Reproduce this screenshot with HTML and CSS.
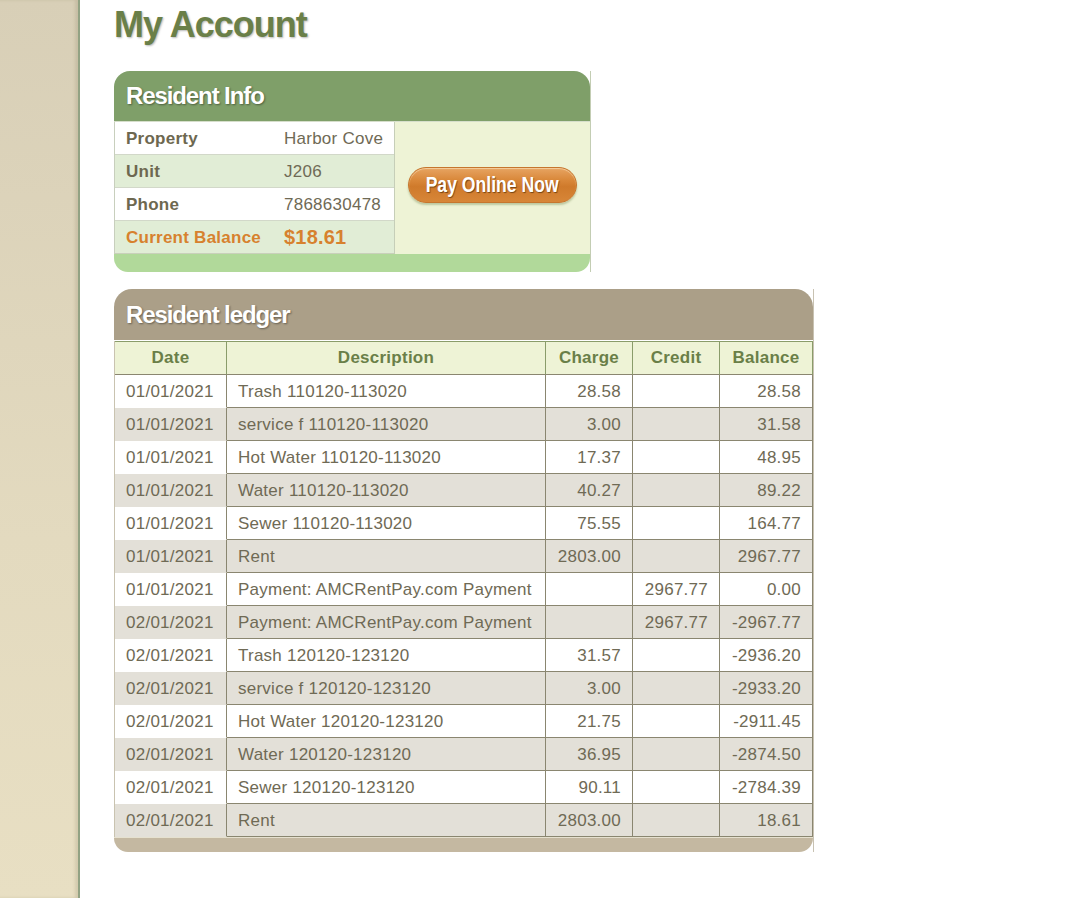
FILE: index.html
```html
<!DOCTYPE html>
<html>
<head>
<meta charset="utf-8">
<title>My Account</title>
<link rel="stylesheet" href="styles.css">
</head>
<body>
<div class="page">
  <aside class="sidebar"></aside>
  <main class="main">
    <h1 class="title">My Account</h1>

    <section class="info-panel">
      <div class="info-inner">
        <div class="info-head">Resident Info</div>
        <div class="info-body">
          <table class="info-table">
            <tr class="row-white"><td class="lbl">Property</td><td class="val">Harbor Cove</td></tr>
            <tr class="row-green"><td class="lbl">Unit</td><td class="val">J206</td></tr>
            <tr class="row-white"><td class="lbl">Phone</td><td class="val">7868630478</td></tr>
            <tr class="row-green"><td class="lbl lbl-orange">Current Balance</td><td class="val val-balance">$18.61</td></tr>
          </table>
          <div class="pay-area">
            <a class="pay-btn" href="#"><span class="pay-text">Pay Online Now</span></a>
          </div>
        </div>
        <div class="info-foot"></div>
      </div>
    </section>

    <section class="ledger-panel">
      <div class="ledger-inner">
        <div class="ledger-head">Resident ledger</div>
        <table class="ledger">
          <thead>
            <tr>
              <th class="c-date">Date</th>
              <th class="c-desc">Description</th>
              <th class="c-num">Charge</th>
              <th class="c-num">Credit</th>
              <th class="c-bal">Balance</th>
            </tr>
          </thead>
          <tbody>
            <tr><td class="c-date">01/01/2021</td><td class="c-desc">Trash 110120-113020</td><td class="c-num">28.58</td><td class="c-num"></td><td class="c-bal">28.58</td></tr>
            <tr class="alt"><td class="c-date">01/01/2021</td><td class="c-desc">service f 110120-113020</td><td class="c-num">3.00</td><td class="c-num"></td><td class="c-bal">31.58</td></tr>
            <tr><td class="c-date">01/01/2021</td><td class="c-desc">Hot Water 110120-113020</td><td class="c-num">17.37</td><td class="c-num"></td><td class="c-bal">48.95</td></tr>
            <tr class="alt"><td class="c-date">01/01/2021</td><td class="c-desc">Water 110120-113020</td><td class="c-num">40.27</td><td class="c-num"></td><td class="c-bal">89.22</td></tr>
            <tr><td class="c-date">01/01/2021</td><td class="c-desc">Sewer 110120-113020</td><td class="c-num">75.55</td><td class="c-num"></td><td class="c-bal">164.77</td></tr>
            <tr class="alt"><td class="c-date">01/01/2021</td><td class="c-desc">Rent</td><td class="c-num">2803.00</td><td class="c-num"></td><td class="c-bal">2967.77</td></tr>
            <tr><td class="c-date">01/01/2021</td><td class="c-desc">Payment: AMCRentPay.com Payment</td><td class="c-num"></td><td class="c-num">2967.77</td><td class="c-bal">0.00</td></tr>
            <tr class="alt"><td class="c-date">02/01/2021</td><td class="c-desc">Payment: AMCRentPay.com Payment</td><td class="c-num"></td><td class="c-num">2967.77</td><td class="c-bal">-2967.77</td></tr>
            <tr><td class="c-date">02/01/2021</td><td class="c-desc">Trash 120120-123120</td><td class="c-num">31.57</td><td class="c-num"></td><td class="c-bal">-2936.20</td></tr>
            <tr class="alt"><td class="c-date">02/01/2021</td><td class="c-desc">service f 120120-123120</td><td class="c-num">3.00</td><td class="c-num"></td><td class="c-bal">-2933.20</td></tr>
            <tr><td class="c-date">02/01/2021</td><td class="c-desc">Hot Water 120120-123120</td><td class="c-num">21.75</td><td class="c-num"></td><td class="c-bal">-2911.45</td></tr>
            <tr class="alt"><td class="c-date">02/01/2021</td><td class="c-desc">Water 120120-123120</td><td class="c-num">36.95</td><td class="c-num"></td><td class="c-bal">-2874.50</td></tr>
            <tr><td class="c-date">02/01/2021</td><td class="c-desc">Sewer 120120-123120</td><td class="c-num">90.11</td><td class="c-num"></td><td class="c-bal">-2784.39</td></tr>
            <tr class="alt"><td class="c-date">02/01/2021</td><td class="c-desc">Rent</td><td class="c-num">2803.00</td><td class="c-num"></td><td class="c-bal">18.61</td></tr>
          </tbody>
        </table>
        <div class="ledger-foot"></div>
      </div>
    </section>
  </main>
</div>
</body>
</html>
```
FILE: styles.css
```css
* { box-sizing: border-box; }

html, body {
  margin: 0;
  padding: 0;
  background: #ffffff;
}

body {
  font-family: "Liberation Sans", Arial, sans-serif;
  color: #6f6a55;
}

.page {
  display: flex;
  min-height: 898px;
}

.sidebar {
  flex: 0 0 80px;
  width: 80px;
  background: linear-gradient(to bottom, #d8cfb7 0%, #e3dabf 60%, #e8dfc3 100%);
  box-shadow: inset -3px 0 3px rgba(120, 110, 80, 0.18);
  border-right: 2px solid #92a283;
}

.main {
  flex: 1;
  padding: 4px 0 0 34px;
}

.title {
  margin: 0 0 26px 0;
  font-size: 36px;
  line-height: 41px;
  font-weight: bold;
  letter-spacing: -1px;
  color: #6a7f48;
  text-shadow: 1px 1px 2px rgba(0, 0, 0, 0.28);
}

/* ---------- Resident Info ---------- */
.info-panel {
  width: 477px;
  border-right: 1px solid #c3cdb3;
}

.info-inner {
  display: flex;
  flex-direction: column;
}

.info-head {
  height: 50px;
  line-height: 50px;
  padding-left: 12px;
  background: #7f9f69;
  border-radius: 16px 16px 0 0;
  color: #ffffff;
  font-size: 24px;
  font-weight: bold;
  letter-spacing: -1.1px;
  text-shadow: 1px 1px 2px rgba(0, 0, 0, 0.4);
}

.info-body {
  display: flex;
  border-top: 1px solid #d6decb;
}

.info-table {
  width: 281px;
  border-collapse: separate;
  border-spacing: 0;
  border-left: 1px solid #c8cfbd;
  border-right: 1px solid #c6ceb8;
}

.info-table td {
  height: 33px;
  padding: 1px 0 0 11px;
  font-size: 17px;
  letter-spacing: 0.25px;
  line-height: 31px;
  border-bottom: 1px solid #d2d8c9;
  vertical-align: middle;
}

.info-table tr:last-child td {
  border-bottom: 1px solid #c9d0bb;
}

.row-white td { background: #ffffff; }
.row-green td { background: #e1edd6; }

.lbl {
  width: 158px;
  font-weight: bold;
  color: #6d6850;
}

.val {
  color: #6f6a55;
}

.lbl-orange {
  color: #d7812e;
}

.info-table td.val-balance {
  color: #d7812e;
  font-weight: bold;
  font-size: 20px;
  letter-spacing: 0.2px;
}

.pay-area {
  flex: 1;
  background: #eef3d6;
  display: flex;
  align-items: flex-start;
  justify-content: center;
  padding-top: 45px;
}

.pay-btn {
  display: flex;
  align-items: center;
  justify-content: center;
  width: 169px;
  height: 36px;
  border-radius: 18px;
  text-decoration: none;
  background: linear-gradient(to bottom, #e7a462 0%, #d9883a 35%, #cf7a2b 55%, #d78638 100%);
  border: 1px solid #c6762e;
  box-shadow: inset 0 1px 1px rgba(255, 235, 200, 0.6), 0 2px 2px rgba(100, 120, 60, 0.35);
}

.pay-text {
  display: inline-block;
  color: #ffffff;
  font-size: 22px;
  font-weight: bold;
  transform: scaleX(0.8);
  text-shadow: 1px 1px 1px rgba(60, 30, 0, 0.6);
  line-height: 22px;
}

.info-foot {
  height: 18px;
  background: #b1d99a;
  border-radius: 0 0 14px 14px;
}

/* ---------- Ledger ---------- */
.ledger-panel {
  width: 700px;
  margin-top: 17px;
  border-right: 1px solid #c8c2b2;
}

.ledger-inner {
  display: flex;
  flex-direction: column;
}

.ledger-head {
  height: 51px;
  line-height: 51px;
  padding-left: 12px;
  background: #ab9f88;
  border-radius: 18px 18px 0 0;
  color: #ffffff;
  font-size: 24px;
  font-weight: bold;
  letter-spacing: -1.1px;
  text-shadow: 1px 1px 2px rgba(0, 0, 0, 0.4);
}

.ledger {
  width: 699px;
  margin-top: 1px;
  border-collapse: separate;
  border-spacing: 0;
  border-left: 1px solid #c9c3b0;
  font-size: 17px;
  letter-spacing: 0.25px;
}

.ledger th {
  height: 34px;
  background: #eef3d6;
  color: #6a7f48;
  font-weight: bold;
  text-align: center;
  border-top: 1px solid #8a9c6a;
  border-bottom: 1px solid #8a8670;
  border-right: 1px solid #8a9c6a;
  padding: 0;
  line-height: 32px;
}

.ledger td {
  height: 33px;
  line-height: 31px;
  padding: 1px 0 0 0;
  background: #ffffff;
  color: #6f6a55;
  border-right: 1px solid #8a8670;
  border-bottom: 1px solid #8a8670;
  white-space: nowrap;
}

.ledger tr.alt td {
  background: #e3e0d8;
}

.ledger td.c-date {
  border-bottom: 1px solid #ffffff;
  padding-left: 11px;
}

.ledger tr.alt td.c-date {
  border-bottom-color: #e3e0d8;
}

.c-date { width: 112px; }
.c-desc { width: 319px; }
.c-num { width: 87px; }
.c-bal { width: 93px; }

.ledger td.c-desc {
  padding-left: 11px;
}

.ledger td.c-num,
.ledger td.c-bal {
  text-align: right;
  padding-right: 11px;
}

.ledger-foot {
  height: 15px;
  background: #c4b8a1;
  border-top: 1px solid #e6e1cf;
  border-radius: 0 0 14px 14px;
}
```
